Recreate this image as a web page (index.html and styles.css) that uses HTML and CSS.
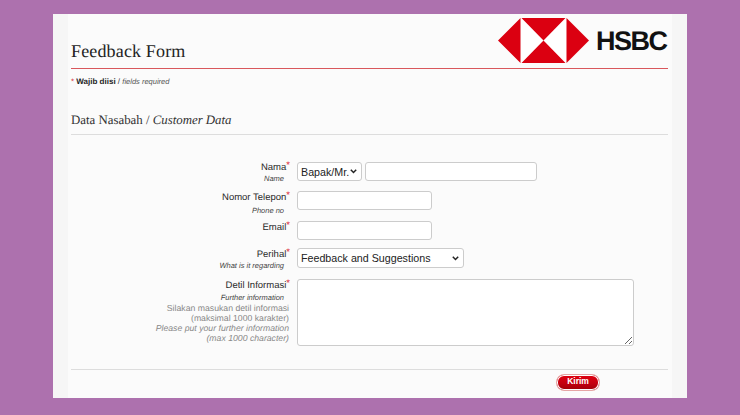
FILE: index.html
```html
<!DOCTYPE html>
<html lang="id">
<head>
<meta charset="utf-8">
<title>Feedback Form</title>
<link rel="stylesheet" href="styles.css">
</head>
<body>
<main class="card">
  <div class="inner">
    <header class="top">
      <h1 class="title">Feedback Form</h1>
      <div class="logo">
        <svg class="hex" width="91" height="45" viewBox="0 0 91 45" aria-hidden="true">
          <rect x="23" y="0" width="45" height="45" fill="#fff"/>
          <path fill="#db0011" d="M0 22.5 22.5 0v45zM91 22.5 68.500 0v45zM23.500 0h44L45.500 22.500zM23.500 45h44L45.500 22.500z"/>
        </svg>
        <span class="brand">HSBC</span>
      </div>
    </header>
    <p class="req"><span class="star">*</span> <b>Wajib diisi</b> / <i>fields required</i></p>
    <h2 class="section">Data Nasabah / <i>Customer Data</i></h2>
    <form class="form">
      <div class="row row-name">
        <div class="lab"><span class="main">Nama<sup>*</sup></span><i class="sub">Name</i></div>
        <div class="ctl"><select class="sel sel-title"><option>Bapak/Mr.</option></select><input class="inp inp-name" type="text"></div>
      </div>
      <div class="row row-phone">
        <div class="lab"><span class="main">Nomor Telepon<sup>*</sup></span><i class="sub">Phone no</i></div>
        <div class="ctl"><input class="inp inp-short" type="text"></div>
      </div>
      <div class="row row-email">
        <div class="lab"><span class="main">Email<sup>*</sup></span></div>
        <div class="ctl"><input class="inp inp-short" type="text"></div>
      </div>
      <div class="row row-subject">
        <div class="lab"><span class="main">Perihal<sup>*</sup></span><i class="sub">What is it regarding</i></div>
        <div class="ctl"><select class="sel sel-subject"><option>Feedback and Suggestions</option></select></div>
      </div>
      <div class="row row-detail">
        <div class="lab"><span class="main">Detil Informasi<sup>*</sup></span><i class="sub">Further information</i>
          <span class="hint">Silakan masukan detil informasi<br>(maksimal 1000 karakter)</span>
          <i class="hint">Please put your further information<br>(max 1000 character)</i></div>
        <div class="ctl"><textarea class="area"></textarea></div>
      </div>
      <div class="actions"><button class="send" type="button">Kirim</button></div>
    </form>
  </div>
</main>
</body>
</html>
```
FILE: styles.css
```css
* { box-sizing: border-box; }
html, body { margin: 0; height: 415px; overflow: hidden; }
body {
  background: #ad71ae;
  padding: 14px 53px 17px;
  font-family: "Liberation Sans", Arial, sans-serif;
  color: #333;
  text-rendering: geometricPrecision;
}
.card { height: 384px; background: #f6f6f6; padding: 0 15px; }
.inner { height: 384px; background: #fbfbfb; padding: 0 4px 0 3px; }
.top {
  height: 55px;
  border-bottom: 1px solid #d9575c;
  display: flex;
  justify-content: space-between;
}
.title {
  margin: 27px 0 0;
  font: 400 18px/20px "Liberation Serif", serif;
  letter-spacing: 0.15px;
  color: #222;
}
.logo { display: flex; align-items: center; gap: 7px; height: 45px; margin-top: 4px; }
.hex { display: block; }
.brand {
  font: 700 27px/27px "Liberation Sans", Arial, sans-serif;
  letter-spacing: -1.5px;
  color: #111;
  width: 72px;
  margin-top: 1px;
}
.req { margin: 7px 0 0; font-size: 8px; line-height: 11px; color: #333; }
.req b { font-weight: 700; color: #222; }
.req i { font-size: 7.500px; color: #555; }
.star { color: #d9232e; }
.section {
  margin: 25px 0 0;
  height: 23px;
  font: 400 12.850px/16px "Liberation Serif", serif;
  color: #333;
  border-bottom: 1px solid #ddd;
}
.form { display: block; }
.row { display: grid; grid-template-columns: 219px 1fr; column-gap: 7px; }
.row-name { margin-top: 27px; height: 29px; }
.row-phone { height: 30px; }
.row-email { height: 27px; }
.row-subject { height: 31px; }
.row-detail { height: 90px; }
.lab { text-align: right; font-size: 10px; line-height: 12px; color: #333; }
.main { display: block; font-size: 9.500px; line-height: 11px; color: #2a2a2a; }
.main sup { color: #d9232e; font-size: 9.500px; line-height: 0; vertical-align: 2px; }
.sub { display: block; font-size: 7.500px; line-height: 11px; margin-top: 2px; padding-right: 6px; color: #444; }
.row-name .sub, .row-subject .sub { margin-top: 0; }
.row-phone .lab, .row-email .lab, .row-subject .lab, .row-detail .lab { padding-top: 1px; }
.row-detail .sub { margin-top: 1px; }
.hint { display: block; text-align: right; font-size: 8.700px; line-height: 10px; color: #888; padding-right: 1px; }
.ctl { display: flex; gap: 3px; align-items: flex-start; }
.inp, .sel, .area {
  background: #fff;
  border: 1px solid #ccc;
  border-radius: 3px;
  margin: 0;
  font-family: "Liberation Sans", Arial, sans-serif;
}
.inp { height: 19px; padding: 0 3px; }
.inp-name { width: 172px; }
.inp-short { width: 135px; }
.sel {
  appearance: none;
  height: 20px;
  font-size: 10.700px;
  color: #222;
  padding: 0 0 0 3px;
  background: #fff url("data:image/svg+xml,%3Csvg xmlns='http://www.w3.org/2000/svg' width='7' height='5'%3E%3Cpath d='M.8.8 3.500 3.500 6.200.8' fill='none' stroke='%23222' stroke-width='1.500'/%3E%3C/svg%3E") no-repeat right 4px center;
}
.sel-title { width: 65px; height: 19px; }
.sel-subject { width: 167px; }
.area { display: block; width: 337px; height: 67px; resize: both; }
.actions {
  border-top: 1px solid #ddd;
  padding: 4px 0 0 485px;
}
.send {
  display: block;
  width: 44px;
  height: 17px;
  padding: 0 0 2px;
  border: 1px solid #e5a5a5;
  border-radius: 8px;
  box-shadow: inset 0 0 0 1px #fff;
  background: linear-gradient(#e0000f, #c40010 55%, #a00008);
  color: #fff;
  font: 700 8.500px/9px "Liberation Sans", Arial, sans-serif;
}
```
